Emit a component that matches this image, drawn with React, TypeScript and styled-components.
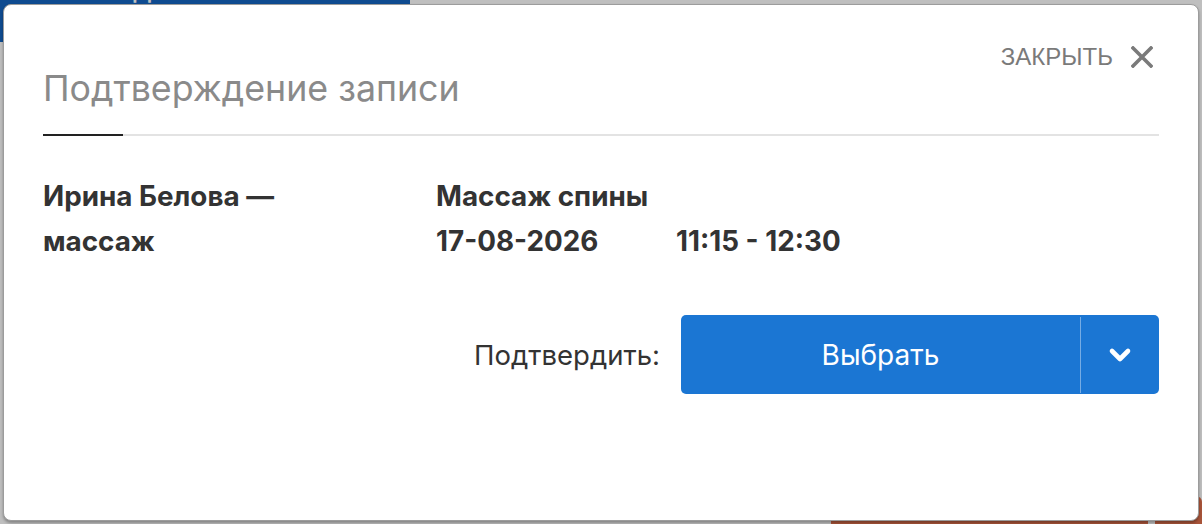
import React from 'react';
import styled, { createGlobalStyle } from 'styled-components';

const GlobalStyle = createGlobalStyle`
    html, body {
        margin: 0;
        padding: 0;
        overflow: hidden;
    }
    body {
        font-family: Inter, "Noto Sans", sans-serif;
        color: #333;
    }
`;

// page behind the dialog, only its edges show
const StyledPage = styled.div`
    position: relative;
    height: 524px;
    overflow: hidden;
    background: #fff;
    display: flex;
    flex-direction: column;
    justify-content: space-between;
`;

const StyledPageHeader = styled.div`
    display: flex;
    margin-top: -38px;
`;

const StyledCreateButton = styled.div`
    box-sizing: border-box;
    width: 416px;
    height: 80px;
    margin-left: -6px;
    padding: 7px 0 0 56px;
    border-radius: 6px;
    background: #1565c0;
    color: #fff;
    font-size: 30px;
    line-height: 36px;
`;

const StyledPageFooter = styled.div`
    display: flex;
    justify-content: flex-end;
    gap: 7px;
    margin-bottom: -24px;
`;

const StyledDangerButton = styled.div<{ $width: number }>`
    width: ${props => props.$width}px;
    height: 52px;
    border-radius: 6px;
    background: #e0714d;
`;

const StyledBackdrop = styled.div`
    position: absolute;
    inset: 0;
    background: rgba(0, 0, 0, 0.25);
`;

const StyledModal = styled.div`
    position: absolute;
    top: 4px;
    left: 3px;
    right: 3px;
    bottom: 3px;
    box-sizing: border-box;
    background: #fff;
    border: 1px solid #9c9c9c;
    border-radius: 8px;
    box-shadow: 0 2px 3px rgba(0, 0, 0, 0.3);
    padding: 0 39px;
`;

const StyledModalHeader = styled.div`
    display: flex;
    justify-content: space-between;
    align-items: flex-start;
    padding-top: 38px;
`;

const StyledTitle = styled.h2`
    margin: 23px 0 0;
    font-size: 35.75px;
    line-height: 44px;
    font-weight: 400;
    color: #8a8a8a;
`;

const StyledCloseButton = styled.button`
    display: flex;
    align-items: center;
    gap: 18px;
    margin-right: 6px;
    padding: 0;
    border: none;
    background: none;
    cursor: pointer;
    font-family: "Liberation Sans", Arial, sans-serif;
    font-size: 24px;
    color: #7a7a7a;
`;

const StyledTabLine = styled.div`
    margin-top: 24px;
    height: 2px;
    background: #e3e3e3;
`;

const StyledTabActive = styled.div`
    width: 80px;
    height: 2px;
    background: #222;
`;

const StyledDetails = styled.div`
    display: grid;
    grid-template-columns: 393px 1fr;
    margin-top: 38px;
    font-size: 27.8px;
    line-height: 45px;
    font-weight: 700;
    color: #333;
`;

const StyledMaster = styled.div`
    max-width: 300px;
`;

const StyledWhenRow = styled.div`
    display: grid;
    grid-template-columns: 240px auto;
`;

const StyledConfirmRow = styled.div`
    display: flex;
    justify-content: flex-end;
    align-items: center;
    gap: 21px;
    margin-top: 51px;
`;

const StyledConfirmLabel = styled.span`
    font-size: 27.5px;
    color: #333;
`;

const StyledSplitButton = styled.div`
    display: flex;
    width: 478px;
    height: 79px;
    border-radius: 5px;
    background: #1b76d3;
    color: #fff;
    overflow: hidden;
`;

const StyledSplitMain = styled.button`
    flex: 1;
    border: none;
    background: none;
    color: inherit;
    font-family: inherit;
    font-size: 28px;
    cursor: pointer;
`;

const StyledSplitDivider = styled.div`
    width: 1px;
    margin: 2px 0 1px;
    background: rgba(255, 255, 255, 0.4);
`;

const StyledSplitToggle = styled.button`
    width: 78px;
    border: none;
    background: none;
    display: flex;
    align-items: center;
    justify-content: center;
    cursor: pointer;
`;

export default function App() {
    return (
        <>
            <GlobalStyle />
            <StyledPage>
                <StyledPageHeader>
                    <StyledCreateButton>+ Создать запись</StyledCreateButton>
                </StyledPageHeader>
                <StyledPageFooter>
                    <StyledDangerButton $width={317} />
                    <StyledDangerButton $width={47} />
                </StyledPageFooter>
                <StyledBackdrop />
                <StyledModal>
                    <StyledModalHeader>
                        <StyledTitle>Подтверждение записи</StyledTitle>
                        <StyledCloseButton>
                            ЗАКРЫТЬ
                            <svg width="22" height="22" viewBox="0 0 22 22">
                                <path d="M2 2 L20 20 M20 2 L2 20" stroke="#7a7a7a" strokeWidth="3.6" strokeLinecap="square" fill="none" />
                            </svg>
                        </StyledCloseButton>
                    </StyledModalHeader>
                    <StyledTabLine>
                        <StyledTabActive />
                    </StyledTabLine>
                    <StyledDetails>
                        <StyledMaster>Ирина Белова — массаж</StyledMaster>
                        <div>
                            <div>Массаж спины</div>
                            <StyledWhenRow>
                                <span>17-08-2026</span>
                                <span>11:15 - 12:30</span>
                            </StyledWhenRow>
                        </div>
                    </StyledDetails>
                    <StyledConfirmRow>
                        <StyledConfirmLabel>Подтвердить:</StyledConfirmLabel>
                        <StyledSplitButton>
                            <StyledSplitMain>Выбрать</StyledSplitMain>
                            <StyledSplitDivider />
                            <StyledSplitToggle>
                                <svg width="24" height="16" viewBox="0 0 24 16">
                                    <path d="M4 4 L12 12 L20 4" stroke="#fff" strokeWidth="4.6" strokeLinecap="round" strokeLinejoin="round" fill="none" />
                                </svg>
                            </StyledSplitToggle>
                        </StyledSplitButton>
                    </StyledConfirmRow>
                </StyledModal>
            </StyledPage>
        </>
    );
}
